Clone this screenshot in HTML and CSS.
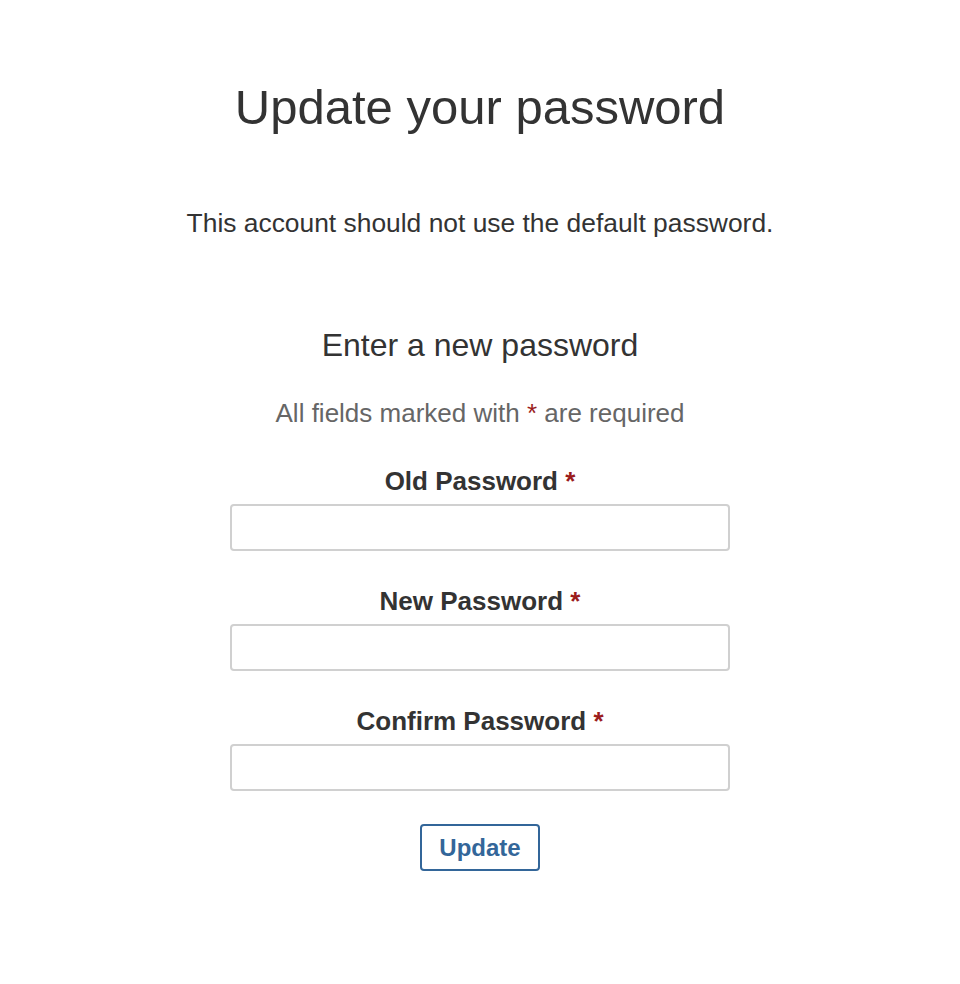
FILE: index.html
```html
<!DOCTYPE html>
<html lang="en">
<head>
    <meta charset="UTF-8">
    <meta name="viewport" content="width=device-width, initial-scale=1.0">
    <title>Update your password</title>
    <link rel="stylesheet" href="styles.css">
</head>
<body>
    <div class="page">
        <h1>Update your password</h1>
        <p class="info">This account should not use the default password.</p>

        <form class="form">
            <h2>Enter a new password</h2>
            <p class="note">All fields marked with <span class="req">*</span> are required</p>

            <div class="field">
                <label for="old">Old Password <span class="req">*</span></label>
                <input type="password" id="old">
            </div>
            <div class="field">
                <label for="new">New Password <span class="req">*</span></label>
                <input type="password" id="new">
            </div>
            <div class="field">
                <label for="confirm">Confirm Password <span class="req">*</span></label>
                <input type="password" id="confirm">
            </div>

            <button type="button" class="btn">Update</button>
        </form>
    </div>
</body>
</html>
```

FILE: styles.css
```css
*{
    margin: 0;
    padding: 0;
    box-sizing: border-box;
}
body{
    font-family: "Liberation Sans", Arial, Helvetica, sans-serif;
    color: #333;
    background: #fff;
}
.page{
    padding-top: 79px;
    text-align: center;
}
h1{
    font-size: 49px;
    line-height: 56px;
    font-weight: normal;
}
.info{
    font-size: 26.4px;
    line-height: 30px;
    margin-top: 73px;
}
.form{
    display: flex;
    flex-direction: column;
    align-items: center;
}
h2{
    font-size: 32px;
    line-height: 36px;
    font-weight: normal;
    margin-top: 89px;
}
.note{
    font-size: 26px;
    line-height: 30px;
    color: #666;
    margin-top: 35px;
}
.req{
    color: #9b1c1c;
}
.field{
    display: flex;
    flex-direction: column;
    align-items: center;
    margin-top: 38px;
}
.field + .field{
    margin-top: 35px;
}
label{
    font-size: 26px;
    line-height: 30px;
    font-weight: bold;
}
input{
    width: 500px;
    height: 47px;
    margin-top: 8px;
    border: 2px solid #d0d0d0;
    border-radius: 4px;
    font-size: 22px;
    padding: 0 10px;
    outline: none;
}
.btn{
    margin-top: 33px;
    width: 120px;
    height: 47px;
    border: 2px solid #336699;
    border-radius: 4px;
    background: #fff;
    color: #336699;
    font-family: inherit;
    font-size: 24px;
    font-weight: bold;
    line-height: 41px;
    cursor: pointer;
}
```
